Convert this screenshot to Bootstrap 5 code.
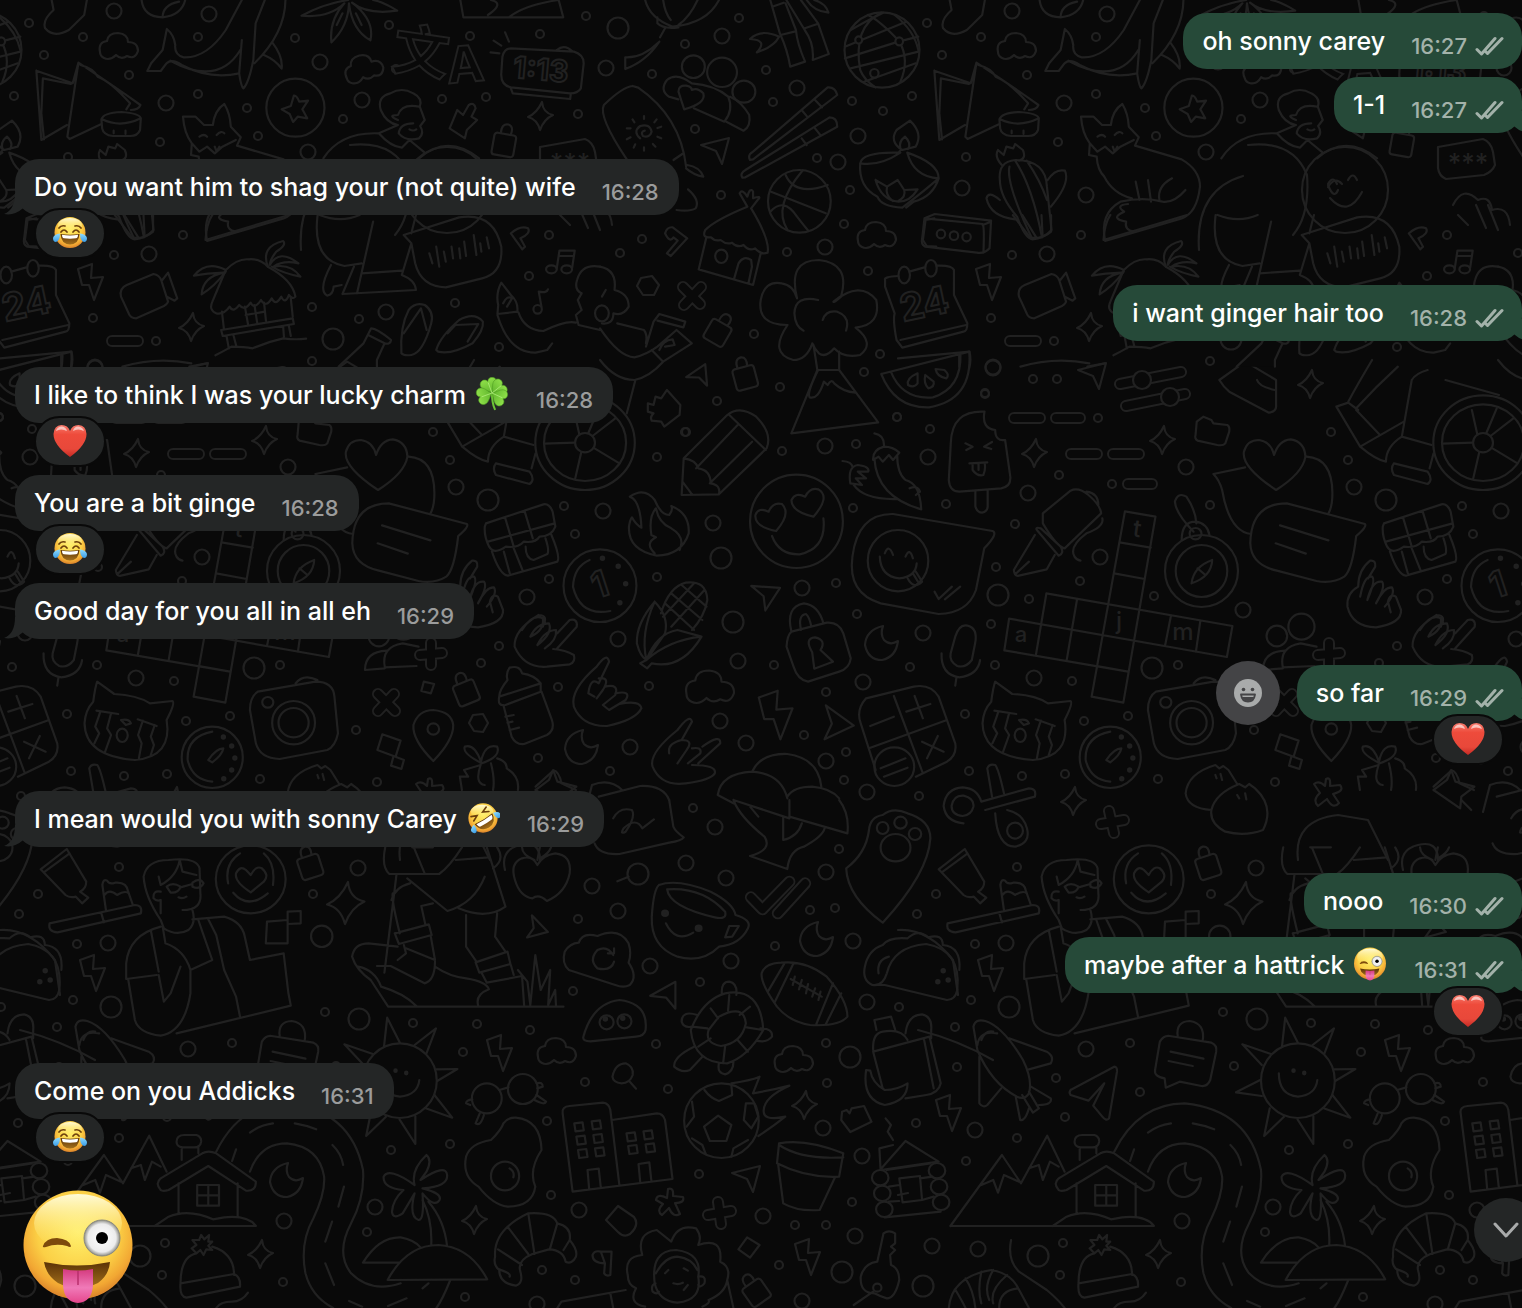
<!DOCTYPE html>
<html lang="en">
<head>
<meta charset="utf-8">
<meta name="viewport" content="width=device-width, initial-scale=1">
<title>Chat</title>
<link href="https://cdn.jsdelivr.net/npm/bootstrap@5.3.0/dist/css/bootstrap.min.css" rel="stylesheet">
<style>
:root{--wall:#090909;--line:#212121;--in:#242626;--out:#264a39}
body{background:var(--wall);color:#fff;font-family:Inter,"Liberation Sans",sans-serif}
.chat{min-height:100vh;overflow:hidden}
.wall{position:absolute;inset:0;width:1794px;height:1308px;pointer-events:none}
.wall path,.wall ellipse,.wall circle,.wall rect{fill:none;stroke:var(--line);stroke-width:2.2;stroke-linecap:round;stroke-linejoin:round;vector-effect:non-scaling-stroke}
.wall .solid{fill:var(--wall)}
.wall .dotfill *{fill:var(--line)}
.wall .fat *{stroke-width:12}
.wall .core *{stroke:var(--wall);stroke-width:8}
.wall text{fill:var(--wall);stroke:var(--line);stroke-width:2;font-family:Inter,"Noto Sans CJK SC",sans-serif;font-weight:700;text-anchor:middle}
.wall .thin{fill:var(--line);stroke:none;font-weight:500}
.thread{position:relative;padding-top:13px}
.turn{margin-top:26px}
.follow{margin-top:8px}
.incoming{padding-left:15px}
.bubble{position:relative;min-height:56px;border-radius:24px;padding:12px 20px 12px 19px;column-gap:26px;font-size:25px;font-weight:500;line-height:32px;white-space:nowrap}
.incoming .bubble{background:var(--in)}
.outgoing .bubble{background:var(--out);padding-right:18px}
.stamp{font-size:22px;line-height:24px;color:#9b9c9c;margin-bottom:-1px}
.outgoing .stamp{color:#a3b2aa}
.ticks{width:29px;height:20px}
.tail::before{content:"";position:absolute;bottom:0;width:26px;height:22px;background:inherit}
.incoming .tail::before{left:-11px;clip-path:path("M11 0 Q11 17 0 21 Q10 23 18 16 L26 8 L26 0 Z")}
.outgoing .tail::before{right:-11px;clip-path:path("M15 0 Q15 17 26 21 Q16 23 8 16 L0 8 L0 0 Z")}
.reaction{position:relative;width:72px;height:51px;margin-top:-7px;padding:0 0 2px;border:2px solid var(--wall);border-radius:26px;background:var(--in)}
.incoming .reaction{margin-left:19px}
.outgoing .reaction{margin-right:18px}
.reaction svg{width:36px;height:36px}
.inline-emoji{width:34px;height:34px;margin:-10px 1px -4px 9px}
.react-btn{width:64px;height:64px;margin:-4px 17px -4px 0;background:#444446}
.big-emoji{width:112px;height:116px;margin-left:7px}
.jump{position:absolute;right:-16px;top:1198px;width:64px;height:64px;background:var(--in)}
</style>
<script src="https://cdn.jsdelivr.net/npm/bootstrap@5.3.0/dist/js/bootstrap.bundle.min.js"></script>
</head>
<body>
<svg width="0" height="0" class="position-absolute" aria-hidden="true">
<defs>
<radialGradient id="skin" cx=".5" cy=".38" r=".62"><stop offset="0" stop-color="#fff06b"/><stop offset=".6" stop-color="#fbcf45"/><stop offset=".85" stop-color="#f2a733"/><stop offset="1" stop-color="#d9822a"/></radialGradient>
<linearGradient id="shine" x1="0" y1="0" x2="0" y2="1"><stop offset="0" stop-color="#fffde0" stop-opacity=".95"/><stop offset="1" stop-color="#ffe95c" stop-opacity="0"/></linearGradient>
<linearGradient id="mouth" x1="0" y1="0" x2="0" y2="1"><stop offset="0" stop-color="#5b3206"/><stop offset="1" stop-color="#a4701c"/></linearGradient>
<linearGradient id="tongue" x1="0" y1="0" x2="0" y2="1"><stop offset="0" stop-color="#d43a7e"/><stop offset=".55" stop-color="#f07ab8"/><stop offset="1" stop-color="#e5468c"/></linearGradient>
<radialGradient id="eye"><stop offset="0" stop-color="#fff"/><stop offset=".78" stop-color="#ececec"/><stop offset="1" stop-color="#8f8f88"/></radialGradient>
<linearGradient id="red" x1="0" y1="0" x2="0" y2="1"><stop offset="0" stop-color="#f77a6c"/><stop offset=".3" stop-color="#ee4b3b"/><stop offset=".75" stop-color="#e8483a"/><stop offset="1" stop-color="#c42a24"/></linearGradient>
<linearGradient id="tear" x1="0" y1="0" x2="0" y2="1"><stop offset="0" stop-color="#8fdcff"/><stop offset="1" stop-color="#3b9de6"/></linearGradient>
<linearGradient id="leaf" x1="0" y1="0" x2="0" y2="1"><stop offset="0" stop-color="#8fe04a"/><stop offset="1" stop-color="#5fb52c"/></linearGradient>
<symbol id="wink" viewBox="0 0 112 116">
 <circle cx="56" cy="56" r="54.500" fill="url(#skin)"/><ellipse cx="56" cy="34" rx="44" ry="29" fill="url(#shine)"/>
 <path d="M21 57Q24 49 35 49Q47 50 49 57Q49 59 45 57Q34 54 24 58Q20 59 21 57Z" fill="#7d4a0c"/>
 <circle cx="80" cy="49" r="18" fill="url(#eye)" stroke="#8a8a80" stroke-width="1"/><circle cx="80" cy="49" r="6" fill="#000"/>
 <path d="M22 73Q55 80 88 73Q87 86 76 94Q56 104 36 94Q24 86 22 73Z" fill="url(#mouth)"/>
 <path d="M41 80Q56 83 71 80V96Q70 113 56 114Q42 113 41 96Z" fill="url(#tongue)"/><path d="M56 82V96" stroke="#b92f6d" stroke-width="1.500"/>
</symbol>
<symbol id="joy" viewBox="0 0 36 36">
 <circle cx="18" cy="17.500" r="15.500" fill="url(#skin)"/><ellipse cx="18" cy="10" rx="12" ry="7" fill="url(#shine)"/>
 <path d="M7 13Q9 10 13 11M29 13Q27 10 23 11M9 17Q12 13 15 17M21 17Q24 13 27 17" fill="none" stroke="#6d400c" stroke-width="1.700" stroke-linecap="round"/>
 <path d="M8.500 19Q18 20.500 27.500 19Q27 29 18 29.500Q9 29 8.500 19Z" fill="url(#mouth)"/><path d="M10 19.800Q18 21 26 19.800Q26 23 24 23.300Q18 24 12 23.300Q10 23 10 19.800Z" fill="#fff"/>
 <path d="M8 18.500Q2 19 1 23Q1 27 4 27Q8 26 8 18.500ZM28 18.500Q34 19 35 23Q35 27 32 27Q28 26 28 18.500Z" fill="url(#tear)"/>
</symbol>
<symbol id="rofl" viewBox="0 0 36 36">
 <circle cx="18" cy="18" r="15.500" fill="url(#skin)"/><ellipse cx="17" cy="11" rx="12" ry="7" fill="url(#shine)"/>
 <g transform="rotate(-32 18 18)"><path d="M8 10L14 12.500L8 15.500M27 10L21 12.500L27 15.500" fill="none" stroke="#6d400c" stroke-width="1.700" stroke-linecap="round"/>
 <path d="M7 19Q18 20.500 29 19Q28 29.500 18 30Q8 29.500 7 19Z" fill="url(#mouth)"/><path d="M8.500 20Q18 21 27.500 20Q27 24 25 24.300Q18 25 11 24.300Q9 24 8.500 20Z" fill="#fff"/>
 <path d="M6 19Q0 20 0 24Q1 28 4 27Q7 25 6 19ZM30 19Q36 20 36 24Q35 28 32 27Q29 25 30 19Z" fill="url(#tear)"/></g>
</symbol>
<symbol id="heart" viewBox="0 0 36 36"><path d="M18 34Q1.500 22 1.500 11Q2 2.500 9.500 2Q16 2 18 8Q20 2 26.500 2Q34 2.500 34.500 11Q34.500 22 18 34Z" fill="url(#red)"/><path d="M4 8Q5 3.500 10 3.500Q14 4 15 8Q9 5 4 8ZM21 8Q22 3.500 26 3.500Q31 4 32 8Q26 5 21 8Z" fill="#fff" opacity=".6"/></symbol>
<path id="leaflet" d="M0 0C-3-4-9-6-9-11C-9-16-2-18 0-13C2-18 9-16 9-11C9-6 3-4 0 0Z" fill="url(#leaf)" stroke="#4f9d22" stroke-width=".6"/>
<symbol id="clover" viewBox="0 0 36 36">
 <path d="M18 17Q18 28 21 34" fill="none" stroke="#6cc437" stroke-width="2.200" stroke-linecap="round"/>
 <use href="#leaflet" transform="translate(18 17) rotate(-20)"/><use href="#leaflet" transform="translate(18 17) rotate(52)"/><use href="#leaflet" transform="translate(18 17) rotate(118)"/><use href="#leaflet" transform="translate(18 17) rotate(-108)"/>
 <path d="M18 17L14 6M18 17L28 9M18 17L29 22M18 17L7 21" stroke="#b4f080" stroke-width=".8"/>
</symbol>
<symbol id="ticks" viewBox="0 0 29 20"><path d="M2 13.500L6.500 18L20 2.500M12.500 17.500L27 2.500M12.500 17.500L10.500 15.500" fill="none" stroke="#a3b2aa" stroke-width="3" stroke-linecap="round" stroke-linejoin="round"/></symbol>
</defs>
</svg>

<main class="chat position-relative">
<svg class="wall" viewBox="0 0 1794 1308" aria-hidden="true">
<defs>
<path id="sparkle" class="solid" d="M2-14Q3-3 13-1Q4 3 0 14Q-3 3-12 1Q-3-3 2-14Z"/>
<path id="bolt" class="solid" d="M-12-13L2-18L1-4L13-5L4 18L-1 3L-8 3Z"/>
<path id="moon" class="solid" d="M3-17Q-14-13-15 2Q-12 17 2 17Q16 14 18-2Q10 3 4-3Q0-9 3-17Z"/>
<path id="cursor" class="solid" d="M-14-5L14-12L7 14L1 1Z"/>
<path id="cloud" class="solid" d="M-18 5Q-20-5-11-6Q-10-14 0-14Q10-13 10-5Q20-5 20 4Q17 13 9 9Q3 13-2 8Q-8 14-14 11Q-18 9-18 5Z"/>
<g id="tag"><path class="solid" d="M-5-10Q-6-20 1-20Q7-19 5-10"/><rect class="solid" x="-11" y="-10" width="22" height="22" rx="3"/></g>
<g id="doodles">
<g id="dots"></g>
<g>
<use href="#sparkle" x="540" y="116"/><use href="#sparkle" x="191" y="327"/><use href="#sparkle" x="136" y="453"/><use href="#sparkle" x="264" y="440"/><use href="#sparkle" x="412" y="384"/><use href="#sparkle" transform="translate(345 903) scale(1.500)"/><use href="#sparkle" x="175" y="801"/><use href="#sparkle" x="260" y="1254"/><use href="#sparkle" x="474" y="1220"/><use href="#sparkle" x="804" y="1105"/>
<use href="#bolt" x="90" y="282"/><use href="#bolt" transform="translate(775 715) scale(1.350)"/><use href="#bolt" x="499" y="1053"/><use href="#bolt" x="92" y="973"/><use href="#bolt" x="50" y="1113"/><use href="#bolt" x="807" y="1257"/>
<use href="#moon" x="580" y="747"/><use href="#moon" x="880" y="643"/><use href="#moon" x="815" y="939"/><use href="#moon" x="285" y="1180"/>
<use href="#cursor" x="715" y="150"/><use href="#cursor" transform="translate(698 377) rotate(-20) scale(.8)"/><use href="#cursor" x="194" y="375"/><use href="#cursor" transform="translate(763 595) rotate(18)"/><use href="#cursor" transform="translate(832 722) rotate(50) scale(1.200)"/><use href="#cursor" transform="translate(534 927) rotate(60) scale(.8)"/><use href="#cursor" transform="translate(665 997) rotate(-15)"/><use href="#cursor" x="746" y="1178"/>
<use href="#cloud" x="118" y="47"/><use href="#cloud" transform="translate(363 69) rotate(-15)"/><use href="#cloud" x="876" y="236"/><use href="#cloud" transform="translate(709 688) scale(1.250)"/><use href="#cloud" x="556" y="1052"/><use href="#cloud" x="793" y="1060"/>
<use href="#tag" transform="translate(745 377) rotate(-15)"/><use href="#tag" transform="translate(718 332) rotate(30)"/><use href="#tag" transform="translate(504 144) rotate(10)"/><use href="#tag" transform="translate(466 692) rotate(-22)"/><use href="#tag" transform="translate(756 1292) rotate(-35)"/><use href="#tag" transform="translate(310 866) rotate(-18)"/>
<path d="M606 1220L618 1206L634 1217Q640 1225 630 1234Q624 1238 618 1232ZM641 278L652 276L659 285L654 295L643 295L637 286ZM473 715L483 714L488 723L483 732L474 731L469 723Z"/>
</g>
<g class="fat"><path d="M683 287L700 304M701 287L684 305M378 694L395 711M394 694L378 711M431 643V665M420 655L442 653M718 1202L721 1224M708 1215L731 1211M211 811L216 833M203 824L226 820M112 341H138M116 418H142M158 418H182M173 454H199M215 454H241M230 484H254M222 384L283 372M228 406L287 394"/></g>
<g class="core"><path d="M683 287L700 304M701 287L684 305M378 694L395 711M394 694L378 711M431 643V665M420 655L442 653M718 1202L721 1224M708 1215L731 1211M211 811L216 833M203 824L226 820M112 341H138M116 418H142M158 418H182M173 454H199M215 454H241M230 484H254M222 384L283 372M228 406L287 394"/></g>
<g><circle class="solid" cx="244" cy="380" r="9"/><circle class="solid" cx="272" cy="397" r="9"/><path d="M428 779Q433 776 432 786L442 785Q447 791 435 794L441 803Q435 810 429 799L420 806Q414 800 422 793L416 784Q421 780 427 786ZM668 1189Q674 1187 673 1196L683 1197Q685 1203 675 1203L680 1214Q673 1218 669 1208L662 1215Q656 1211 663 1204L656 1200Q657 1193 667 1198Z"/></g>

<g transform="scale(.38265 .33333)">
<path d="M135 0L140 30Q110 60 118 85Q140 115 180 90L220 45L227 0M370 0Q375 50 425 52Q475 45 484 0M425 52Q425 15 468 5M436 87Q455 105 458 135Q455 165 480 172Q540 175 590 90L632 0M436 87L425 150L395 190L385 213H420L435 190Q450 175 475 195Q550 240 625 220M445 182Q570 260 628 150M632 120L625 220Q630 260 636 265Q650 250 662 180L668 70L692 0M746 0Q745 100 665 190M712 128Q740 170 736 206Q720 180 690 165"/>
<path d="M910 0Q850 10 788 47Q860 55 900 10Q860 60 866 127Q910 80 912 10Q920 90 968 121Q980 60 920 8Q960 45 1038 32Q1000 5 975 0M880 75L895 40M945 75L930 40M1203 0L1211 52H1472L1460 0M1330 52Q1370 15 1460 0M1283 0Q1320 10 1275 45"/>
<path d="M95 212L190 250L205 188Q300 260 367 315Q362 330 342 330M95 212L108 420L175 375M112 235L185 252M112 235L108 340L115 418M205 188L176 410L182 417L265 372M210 195Q245 205 255 230Q290 245 340 310L330 328M265 358Q270 338 317 336Q365 340 368 355L366 390Q360 408 340 408H295Q270 405 267 385ZM267 358Q315 385 368 355M297 400V392M328 402V392"/>
<ellipse cx="772" cy="323" rx="76" ry="87"/><path d="M768 287Q775 285 782 305L805 302L790 328L803 355L778 350L766 366L757 342L736 328L760 318Z"/>
<path d="M845 475Q890 395 990 400Q1020 440 1050 443L1070 420L1110 458M990 400L1040 375Q1010 370 995 330Q985 290 1020 280Q1050 260 1080 280Q1105 295 1097 320L1110 360L1098 378Q1110 400 1095 415Q1060 425 1042 400Q1045 370 1080 370M1095 475Q1170 400 1252 475M1040 360Q1010 345 1040 345Q1050 310 1095 320M1070 388Q1080 395 1088 388M1175 385L1195 330L1210 345L1225 315Q1240 305 1243 325L1232 350L1247 360L1220 390L1215 415Z"/>
<path d="M1335 145L1500 155Q1528 165 1525 195L1518 265Q1510 280 1490 280L1335 262Q1308 255 1310 220L1313 170Q1318 145 1335 145ZM1335 265L1340 280L1490 297L1492 280M1455 150Q1475 130 1497 155M1290 122L1310 137M1320 97L1330 125M1282 157L1305 160"/>
<path d="M830 645Q815 780 900 798L945 790M975 665L933 880M895 882L925 800M895 882L1087 870Q1085 840 1050 825L1075 730M1087 645L1075 700M945 820L1050 812M865 795Q830 870 855 887Q870 885 872 860L893 855M835 645Q890 670 940 645M1055 705L1200 652Q1290 635 1310 740Q1315 820 1260 835L1165 862Q1100 860 1085 790L1075 730ZM1122 760L1130 790M1140 740L1148 800M1160 755L1165 785M1180 740L1184 775M1200 745L1203 775M1213 725L1218 768M1238 705L1245 765M1255 730L1258 755M1272 712L1278 745"/>
<path d="M537 720L755 645M537 720Q540 670 555 645M300 645L345 712Q375 720 400 695V645M325 645L360 710M375 645L378 710M65 720L72 660L95 655M65 720L75 738L100 740M1335 700L1365 748L1372 740L1360 715Q1388 700 1380 685Q1360 675 1335 700"/>
<path class="solid" d="M590 810Q620 775 650 778Q680 775 700 800Q765 840 772 890Q765 900 755 885Q745 915 735 890Q720 920 710 895Q695 925 682 900Q665 930 655 908Q640 935 625 915Q610 940 600 920Q585 945 565 940Q545 930 555 905Q575 850 590 810"/>
<path d="M580 935L585 985M760 895L765 950M578 990L765 955L768 972L582 1008ZM592 1008L598 1045M610 1005L618 1040M740 980L742 1010M755 978L760 1008M563 1066Q590 1050 605 1040Q640 1040 660 1045Q700 1025 740 1015Q770 1020 800 1016M640 920L648 972M665 915L672 968M690 908L695 962M642 945L692 935M700 800Q680 740 740 723Q750 735 722 755Q705 780 705 795Q730 745 780 790Q740 780 715 800Q760 790 785 830Q740 820 710 800M590 810Q540 780 507 827Q540 820 585 818Q530 830 527 883Q560 860 590 815"/>
<path d="M1455 805L1462 752H1502L1495 805M1460 768H1500M1415 920L1408 875Q1430 880 1432 868M1310 848Q1295 880 1302 915L1300 942L1352 935Q1355 905 1335 885ZM1315 910Q1325 885 1338 895L1325 920M1300 945Q1330 1060 1400 1058L1430 1050L1443 1030M1355 937Q1370 990 1420 993Q1480 960 1505 968M1568 800Q1520 790 1508 840Q1500 870 1520 880L1510 900L1520 930L1505 945L1512 975L1568 990"/>
<ellipse cx="1441" cy="808" rx="14" ry="12"/><ellipse cx="1481" cy="808" rx="14" ry="12"/><ellipse cx="1405" cy="928" rx="11" ry="13"/>
<path class="solid" d="M1049 1060Q1045 980 1068 930Q1085 905 1110 915Q1135 935 1127 970Q1105 1060 1075 1065Q1055 1068 1049 1060ZM1055 1000L1100 925L1115 990M1140 1050Q1150 1010 1200 960Q1240 935 1262 965Q1265 990 1235 1030Q1180 1065 1145 1055ZM1170 1000L1190 975L1250 972L1222 1025M885 1100L950 1030L970 985Q985 985 1022 1020Q1020 1035 1005 1030L985 1080V1100M962 1005L1005 1030"/>
<path d="M0 1075L187 1055Q192 1080 186 1105M160 1060V1100M495 1100L540 1090M500 1090Q410 1070 320 1100"/>
</g>

<g transform="translate(600 0) scale(.38265 .33333)">
<path d="M118 0Q130 55 190 80Q280 70 311 0M150 52V70Q165 88 205 82M165 0Q170 40 185 60M255 0Q235 50 205 75M170 85L157 112M155 125Q120 185 66 207V172Q110 175 155 125M445 0L470 100Q490 150 497 200L536 185Q515 130 512 90L485 10M487 0L535 90Q560 130 556 180L598 162L570 70L525 0M472 105L508 95M535 85L568 72M450 20L480 8M468 110Q420 85 392 117Q440 120 410 157Q455 140 468 110M540 0Q560 35 597 38Q590 10 560 0"/>
<ellipse cx="737" cy="150" rx="98" ry="113"/><path d="M655 90Q700 60 740 38M640 140L800 65M640 175L782 124L832 110M655 205L832 155M690 245L825 190M735 38Q660 80 680 210Q690 240 720 262M700 45Q730 60 782 124Q810 180 785 245M770 45Q820 90 832 150"/><ellipse class="solid" cx="676" cy="120" rx="9" ry="11"/><ellipse class="solid" cx="782" cy="124" rx="10" ry="12"/><ellipse class="solid" cx="717" cy="220" rx="11" ry="13"/>
<ellipse cx="244" cy="200" rx="30" ry="34"/><ellipse cx="319" cy="217" rx="39" ry="44"/><ellipse cx="376" cy="275" rx="30" ry="33"/><path d="M240 250Q200 215 175 240Q155 270 180 290L205 298M240 250Q300 255 335 290Q350 330 325 365L245 325M330 365L375 392Q395 380 390 345Q370 305 340 290"/><path class="solid" d="M220 328L205 275Q205 255 225 257Q240 260 240 270Q255 262 270 280Q278 310 220 328Z"/>
<path d="M85 258Q60 260 10 315Q-5 350 70 478M225 500Q210 350 100 263L85 258M192 480L215 462M228 495Q260 500 270 530Q245 525 225 505M230 568Q262 600 250 625Q235 635 200 630M115 348V357M85 358L90 367M148 358L142 367M70 385H80M160 380L150 384M70 418L80 412M160 415L150 410M88 443L92 433M115 452V442M145 440L138 432M105 415Q85 395 105 378Q130 370 135 395Q130 415 112 408Q105 395 117 392"/>
<path d="M392 480Q385 465 400 455L595 262Q615 260 620 285L400 478ZM527 330L543 352M562 300L580 322M372 533Q365 520 380 510L600 352Q620 352 620 380L380 532ZM527 415L540 435M562 385L577 407"/>
<ellipse cx="521" cy="604" rx="82" ry="94"/><path d="M447 575L590 640M530 511Q450 620 490 690M485 525Q510 590 595 555M445 635Q480 590 515 650Q535 680 545 693"/>
<path d="M385 620Q300 660 275 690Q265 715 290 712Q300 725 315 720Q330 735 345 728Q360 745 375 735Q390 755 405 745Q420 765 438 758Q445 720 395 625M385 620L365 580Q372 565 385 590Q392 560 400 575V595Q425 585 412 600L395 625M278 712L258 808L400 855L420 760M350 838L362 790Q375 765 395 780L397 800L388 850"/><ellipse cx="317" cy="769" rx="16" ry="20"/>
<path d="M680 490Q685 455 780 458L787 448M680 490Q730 500 785 458M680 490Q675 560 725 590Q735 620 790 623Q850 570 885 535Q885 490 803 458M803 458Q820 530 885 535Q870 590 820 605L800 623M790 450Q755 425 775 390L810 362Q845 400 825 440ZM785 445Q780 425 797 410Q815 430 805 447M720 540L750 560L778 540L795 570L830 568Q810 605 780 605Q735 600 720 540M750 560Q745 585 765 603M795 570Q800 590 780 603"/>
<path d="M848 655L875 642L1022 662L1018 745Q1005 762 985 758L850 740Q838 735 842 715ZM848 655L1000 672Q1005 680 1002 758M1000 675L1022 665"/><ellipse cx="891" cy="702" rx="11" ry="13"/><ellipse cx="925" cy="707" rx="11" ry="13"/><ellipse cx="958" cy="711" rx="11" ry="13"/>
<path d="M1045 540Q1040 485 1085 480Q1165 480 1168 560L1180 690Q1160 715 1130 718Q1110 715 1090 650Q1045 590 1045 540M1070 500Q1060 550 1130 718M1085 482Q1130 560 1155 712M1115 482Q1150 540 1168 600M1170 540Q1190 505 1215 512Q1230 550 1178 620M1045 600Q1015 570 1010 595Q1020 650 1085 658M1050 495Q1030 470 1040 450L1055 465L1062 440L1080 445L1085 432L1105 450Q1115 475 1095 482"/>
<path d="M1257 350L1290 350L1312 375H1335Q1340 330 1365 312Q1380 340 1382 380L1408 412L1398 437L1520 478Q1568 510 1568 560Q1560 640 1520 655L1320 723Q1305 640 1360 605Q1420 590 1470 605Q1500 610 1530 570M1257 350Q1260 400 1280 430L1278 465L1298 470Q1300 510 1318 530Q1340 580 1390 595M1280 430L1300 455L1320 440L1340 460L1360 440L1395 420M1400 545L1410 600M1432 540L1440 605M1495 535Q1455 560 1462 600M1380 612Q1345 615 1370 635Q1330 655 1375 665Q1370 690 1395 695M1340 440L1345 455L1352 440M1300 410Q1312 400 1320 410M1345 405Q1357 390 1365 400"/>
<path d="M745 840Q740 830 780 828M808 815L848 802M880 797Q920 795 925 810V885L960 970Q960 995 950 995L790 1043L775 1020Q765 960 770 940L745 860V840M785 1020L957 975"/><ellipse cx="795" cy="825" rx="15" ry="25"/><ellipse cx="865" cy="805" rx="15" ry="25"/>
<path d="M1095 890Q1090 865 1110 855L1180 822Q1195 825 1200 840L1218 905Q1215 915 1200 922L1135 955Q1120 955 1115 940ZM1203 840L1218 818L1242 895L1235 902L1215 890"/>
<path d="M515 895Q490 780 572 780Q655 790 630 890Q610 910 610 905Q680 840 722 900Q735 975 668 983Q720 1030 680 1065Q635 1075 612 1045Q590 1075 572 1060Q560 1045 555 1030Q540 1080 505 1080Q440 1060 490 975Q410 975 420 900Q430 840 475 850Q505 855 515 895M570 900Q510 885 508 940Q510 980 532 992M582 960Q590 930 620 935Q655 950 643 992M558 1035L568 1110H625V1055M568 1110L500 1300L727 1267L625 1110M570 1110Q540 1180 548 1192Q570 1200 585 1145L595 1155Q605 1135 612 1150Q635 1175 668 1178"/>
<path d="M735 1122L965 1055Q975 1200 860 1222Q770 1225 735 1122M760 1115Q790 1200 870 1192Q945 1165 942 1062M830 1120Q800 1135 805 1155Q820 1165 830 1150ZM850 1125Q845 1150 858 1165Q875 1160 872 1145ZM877 1107Q880 1130 905 1135Q915 1125 900 1110Z"/>
<path d="M0 800Q45 810 38 870Q75 880 75 920Q60 950 35 940Q35 975 5 970M15 870L5 890M0 985Q50 1070 90 1072Q120 1065 150 1040L200 990L240 1030L165 1085L135 1050M155 1050Q165 1020 190 1018L195 1035L170 1040M120 1040L140 965L155 942L223 965L218 982L150 962M45 970L115 990Q125 1005 120 1030M0 1080Q40 1140 90 1140Q130 1130 165 1085M92 1142L70 1240"/><ellipse cx="5" cy="940" rx="18" ry="24"/>
<path d="M125 1210L140 1215L145 1190L160 1195L175 1170L210 1215L208 1245L168 1280L160 1265L135 1262Q130 1250 140 1240L125 1235Z"/>
<path d="M170 700Q175 680 190 682L228 715L185 768L175 760L203 722L192 712Q182 730 170 700"/>
</g>

<g transform="translate(350 400) scale(.41454 .33333)">
<ellipse cx="567" cy="128" rx="120" ry="142"/><ellipse cx="567" cy="128" rx="99" ry="115"/><ellipse cx="567" cy="128" rx="24" ry="29"/><path d="M543 128L468 131M585 108L640 55M590 145L650 190M558 156L543 237M553 102L540 30M575 99L600 25"/>
<path d="M675 290Q710 260 735 300Q750 345 770 345Q780 330 775 318Q820 340 817 400Q800 465 740 467Q670 450 673 380Q675 360 680 352Q690 375 703 383Q700 300 675 290M735 460Q710 430 738 412L727 405Q720 350 738 325Q745 370 775 385Q810 410 795 450"/>
<path d="M800 285L805 175L910 45Q940 15 980 50Q1020 100 1005 145L890 283ZM805 175Q835 180 840 205Q870 210 870 250Q895 255 890 283M915 45L1003 150M935 75L835 205M970 125L868 250M802 245L825 283"/>
<ellipse cx="1077" cy="364" rx="112" ry="140"/><path d="M1018 408Q1035 465 1085 463Q1150 445 1142 355M1028 393Q975 380 978 345Q985 320 1010 335Q1020 305 1042 312Q1065 340 1028 393M1118 350Q1065 335 1065 300Q1075 275 1098 290Q1110 260 1130 268Q1160 290 1118 350"/>
<path d="M1265 100Q1290 105 1288 140Q1260 150 1262 180L1275 170L1285 185L1300 165L1310 180L1325 158Q1310 140 1288 140M1265 175Q1270 290 1378 328Q1375 250 1340 240Q1320 220 1320 165M1188 183Q1210 185 1212 200M1207 250Q1200 200 1225 195Q1255 200 1250 215L1225 215L1245 235L1220 235L1235 255L1207 250M1215 255Q1240 300 1320 297M1350 265Q1370 255 1375 275L1365 285"/>
<path d="M1310 342L1550 393Q1565 400 1530 445L1510 570Q1490 640 1420 642L1280 610Q1200 580 1212 470Q1225 340 1310 342M1278 470Q1280 530 1325 535Q1365 530 1367 490M1290 460Q1300 430 1310 465M1340 470Q1350 440 1358 475M1345 535Q1360 570 1380 545L1365 515M1358 520L1370 545M1410 575L1420 597L1452 560M1435 598L1472 560"/><ellipse cx="1322" cy="482" rx="73" ry="92"/>
<ellipse cx="603" cy="557" rx="88" ry="109"/><path d="M628 633Q555 650 538 560Q540 500 578 480"/><g class="dotfill"><ellipse cx="609" cy="475" rx="4" ry="5"/><ellipse cx="647" cy="499" rx="4" ry="5"/><ellipse cx="665" cy="551" rx="4" ry="5"/><ellipse cx="651" cy="608" rx="4" ry="5"/></g>
<path d="M735 605Q690 670 692 730Q700 770 715 780L700 790L717 805L728 790Q800 810 848 710L790 690M735 605Q770 650 760 700L715 780Q700 700 735 605M848 710Q770 720 715 780Q740 700 790 690M750 640Q770 560 810 548Q860 540 862 600Q855 650 825 690M775 580L850 660M760 610L830 690M800 555L860 620M855 570L775 680M830 550L755 650"/>
<path d="M455 645Q395 690 397 740Q420 805 475 800L530 793Q545 785 540 765Q520 750 490 747M455 645Q480 645 465 680M415 690Q440 640 465 655Q470 690 435 710Q450 670 480 670Q490 700 452 735Q470 690 497 690Q500 720 470 745M500 700L530 660Q550 655 547 680L500 745"/>
<path d="M595 800Q620 755 625 785L600 850Q580 830 575 880L590 890M595 800Q530 870 540 920Q560 980 620 978Q690 960 703 925Q700 900 650 912M600 835Q630 830 610 870L595 895M615 860Q650 850 640 885L610 915M640 880Q680 870 665 900L625 930L610 915"/>
<path d="M790 990Q820 940 825 965L800 1020Q765 1030 770 1060M790 990Q720 1060 730 1100Q750 1160 810 1150Q870 1140 880 1120Q885 1095 825 1095M800 1020Q830 1020 812 1050L790 1090M850 1040Q895 1000 893 1030L840 1090M825 1045Q850 1040 845 1060L815 1090"/>
<path d="M1065 695Q1050 620 1095 610Q1130 615 1142 670M1088 690Q1080 645 1100 642Q1108 650 1113 680M1065 695L1150 668Q1180 665 1190 700L1208 775Q1205 805 1180 815L1105 845Q1080 840 1070 800L1053 740Q1055 705 1065 695M1115 757Q1095 715 1122 712Q1150 720 1135 750L1165 785L1120 806Z"/>
<path d="M1460 710Q1470 670 1490 677Q1515 685 1508 730L1500 780Q1485 805 1465 798Q1445 785 1449 760ZM1427 760Q1425 825 1470 832Q1515 825 1520 780M1463 832L1460 857"/>
<path d="M360 890L460 850M360 890Q355 920 375 915L460 875V850Q445 825 415 820Q410 795 385 803Q375 820 380 840Q360 870 360 890M370 915L390 1010Q400 1035 420 1032L475 1005Q495 990 487 960L462 875M375 950L395 945M380 968L392 965M385 990L408 983"/>
<path d="M1245 895L1360 860Q1400 850 1420 890L1460 1030Q1465 1065 1440 1085L1365 1130M1245 895Q1220 930 1232 970L1268 1110M1312 888L1382 1120M1252 1045L1440 960M1255 978L1312 950M1342 935L1400 912M1362 888L1382 955M1380 1025L1432 1055M1418 1008L1392 1075M1280 1105L1340 1075M1288 1130L1345 1103"/><ellipse cx="1313" cy="1100" rx="48" ry="58"/>
<path d="M201 1083Q150 1020 153 975Q165 930 201 930Q245 935 249 975Q250 1020 201 1083"/><ellipse cx="201" cy="987" rx="14" ry="17"/>
<path d="M78 1003L122 1022L110 1070L66 1050ZM105 1068L130 1080L124 1107L99 1097ZM178 845L203 852L195 880L172 873ZM318 1090Q270 1060 277 1040Q300 1030 316 1085Q325 1030 355 1040Q365 1070 318 1090M355 1075Q380 1085 378 1105Q410 1130 405 1170M270 1170L265 1130H285L275 1110L315 1095Q300 1150 325 1155M340 1090Q350 1140 345 1170M448 1170L480 1140L490 1110Q505 1115 510 1150L545 1170"/>
<path d="M887 1185Q895 1120 970 1115Q1040 1120 1055 1195M970 1115Q990 1060 1055 1062Q1130 1075 1137 1160M1055 1190Q1070 1160 1115 1160Q1160 1165 1180 1195M600 1190L700 1158Q755 1155 770 1200M887 1185L925 1210"/>
</g>

<g transform="translate(900 380) scale(.3967 .33333)">
<path class="solid" d="M213 95Q130 90 128 190L123 300Q125 335 150 335L255 325Q280 320 278 290L265 180Q240 185 240 150Q205 145 213 95ZM190 333V380Q195 398 207 398Q220 395 221 380V330M165 190L183 200L167 210M232 186L212 200L230 207M175 250L220 247M183 250V270Q195 290 210 285Q217 265 213 248M198 250V270"/>
<path d="M360 400L430 332Q450 320 475 345Q505 375 507 400L415 505Q395 500 360 430ZM345 450L400 527Q415 520 405 500L355 445Q340 440 345 450M340 465L287 570Q288 590 300 587L370 568L390 525M290 583L325 545M470 335Q500 340 500 375M510 415Q515 440 470 460Q425 500 440 530Q445 540 455 542"/>
<path d="M567 394L644 410L563 968L483 950ZM553 487L632 503M540 580L617 597M497 858L575 875M369 640L838 738L824 831L275 716L263 811L575 875M369 640L343 822M446 660L420 842M683 707L668 798M757 723L746 815"/>
<ellipse cx="760" cy="573" rx="92" ry="108"/><ellipse cx="760" cy="573" rx="65" ry="78"/><ellipse cx="745" cy="461" rx="15" ry="17"/><path d="M710 480Q710 425 745 425Q775 430 780 465M740 455Q695 400 693 365Q700 335 722 350Q745 390 747 430M735 610Q740 560 787 540Q785 590 735 610M750 565L770 585"/>
<path d="M948 330Q860 260 867 215Q875 180 905 180Q935 185 943 225Q955 180 985 178Q1020 185 1022 230Q1015 280 948 330ZM870 262L790 282Q805 300 812 330Q830 455 885 462M1025 230Q1090 235 1090 340Q1090 380 1080 400"/><path class="solid" d="M975 370L1172 432Q1178 440 1150 468Q1140 570 1120 590Q1090 612 1050 603L950 572Q885 555 883 490Q885 370 975 370ZM958 436L1080 481M947 490L1023 521"/>
<path d="M1220 430L1365 373Q1380 370 1388 395L1395 440Q1385 470 1355 470Q1345 490 1315 485Q1300 505 1270 500Q1240 525 1228 500Q1215 470 1217 440ZM1225 485L1393 430M1268 412L1290 500M1317 392L1338 475M1235 515Q1255 585 1275 587L1400 545Q1408 530 1385 465M1265 515L1280 580M1290 505L1312 570M1320 500Q1320 535 1340 540L1375 522Q1380 510 1370 475"/>
<path d="M1155 620Q1155 570 1185 542Q1200 540 1198 560L1180 595M1155 620Q1125 640 1128 680Q1140 740 1200 742Q1265 730 1263 690L1250 650Q1235 640 1230 665L1237 697M1160 650Q1170 585 1190 590Q1200 600 1178 660Q1190 600 1215 605Q1225 620 1200 670Q1220 620 1240 622Q1250 640 1222 680"/>
<path d="M1150 90L1210 165M1100 80L1160 200Q1200 240 1225 245M1160 200L1270 125M1290 0L1265 170L1340 195M1265 170Q1225 200 1225 245M1245 250L1330 275Q1345 300 1330 312L1245 285Q1235 265 1245 250M1345 220L1335 265M1130 65Q1150 20 1190-60M1100 80L1130 68L1155 90M1150 85Q1200 20 1255-40M1290 0Q1300-20 1330-30M1375 0L1510 45M805 0Q815 20 830 35L930 98Q950 95 948 75V0L870-55ZM900 0Q905 20 945 30"/>
<path d="M748 125L765 110L785 120L790 130L825 135Q832 140 830 155L820 190Q815 198 800 195L750 182Q742 175 745 165Z"/>
<ellipse cx="950" cy="768" rx="26" ry="31"/><ellipse cx="1012" cy="740" rx="33" ry="39"/><path d="M965 862Q955 800 1010 790L1050 800M965 862L1045 858M915 870Q915 815 970 812M915 870L965 865"/>
<path d="M230 965Q235 920 240 905L283 942Q340 945 373 970L430 963Q437 970 415 1020Q430 1130 335 1140Q210 1130 208 1030Q210 990 230 965M238 992L293 1002M342 1018L390 1038M248 995L235 1040L245 1060L233 1090M275 1000L265 1045L275 1065L260 1115M355 1022L343 1065L352 1090L345 1135M385 1035L375 1070L383 1095L375 1125M300 1020Q320 1015 325 1030L312 1035Z"/><ellipse cx="303" cy="1066" rx="14" ry="20"/>
<path d="M645 935L790 905Q835 905 838 950L847 1060Q840 1100 820 1110L700 1137Q650 1135 640 1090L625 990Q625 950 645 935M740 910Q760 880 795 900"/><ellipse cx="735" cy="1028" rx="54" ry="65"/><ellipse cx="735" cy="1028" rx="38" ry="44"/><ellipse cx="670" cy="967" rx="14" ry="16"/>
<ellipse cx="530" cy="1132" rx="77" ry="92"/><path d="M530 1055Q465 1070 468 1140Q480 1200 530 1205M520 1140Q540 1105 558 1105Q555 1125 530 1147Z"/><g class="dotfill"><ellipse cx="558" cy="1071" rx="4" ry="5"/><ellipse cx="579" cy="1098" rx="4" ry="5"/><ellipse cx="587" cy="1134" rx="4" ry="5"/><ellipse cx="579" cy="1170" rx="4" ry="5"/><ellipse cx="559" cy="1196" rx="4" ry="5"/></g>
<path d="M720 1240Q725 1180 795 1155L805 1165L815 1158L828 1170L850 1212M720 1240Q725 1285 785 1290Q795 1240 855 1212L870 1222L880 1212L895 1225Q945 1280 915 1350Q870 1370 820 1355Q780 1330 785 1290M795 1185L798 1195M808 1182L812 1200M850 1245L855 1255M870 1240L873 1258"/>
<path d="M1345 1220L1390 1172L1400 1205L1448 1220L1415 1250L1412 1285L1345 1230M1415 1260L1440 1290"/>
<path d="M110 1278Q115 1225 158 1222Q195 1225 205 1265L325 1225Q345 1225 340 1250L215 1290M232 1250L220 1165Q225 1150 240 1155Q248 1165 262 1240M110 1278Q115 1325 160 1330M130 1278Q135 1245 160 1247Q188 1255 185 1280Q180 1305 158 1308Q130 1305 130 1278M240 1300Q245 1400 290 1400Q330 1390 320 1345Q310 1300 270 1290"/><ellipse cx="290" cy="1352" rx="20" ry="24"/>
</g>
<g transform="translate(350 800) scale(.41454 .33333)">
<path d="M925 0Q940 50 1000 110Q1020 150 965 168L1055 207Q1060 150 1095 140Q1140 110 1145 85M925 0L1060 55V0M965 20L985 50M1045 50V120Q1080 110 1090 70M1060 50L1200 100Q1205 40 1180 0M770 0L780 80Q785 95 805 112Q800 122 770 128L650 162Q600 165 590 130M635 55Q650 20 680 30Q690 50 665 95Q650 105 660 85Q690 50 705 85L733 58M645 244L672 230"/>
<path d="M1285 368Q1200 290 1197 205Q1245 160 1252 90Q1255 50 1285 45Q1310 20 1345 40Q1400 60 1400 115Q1395 220 1285 368Z"/><ellipse cx="1316" cy="143" rx="36" ry="41"/><ellipse cx="1285" cy="84" rx="14" ry="18"/><ellipse cx="1328" cy="68" rx="15" ry="18"/><ellipse cx="1363" cy="102" rx="15" ry="18"/>
<path d="M1420 208L1483 147L1530 245Q1530 265 1515 275L1535 293L1520 310L1505 290Q1490 295 1480 285ZM1430 215L1490 160"/>
<path d="M85 142Q75 200 95 222H215Q240 200 270 142M150 142H200M155 145L180 220M112 225L83 518M138 235L235 333Q300 310 325 230M330 142L375 320Q330 360 262 325M255 180L335 172M103 280Q100 300 120 400M172 318L182 375M172 318L200 310M108 400L190 373L197 405L118 432ZM100 300Q110 260 145 250M130 435L135 460L115 480M135 445L205 480L195 410M65 498H98L180 550Q205 540 205 485M280 345V440L305 485M355 340L350 410L375 455M303 487L380 455L387 492L312 518ZM318 520L330 548L415 528L420 615M388 495L395 525M205 500Q240 530 280 535Q330 545 335 568Q300 585 310 620M5 470Q10 430 45 430L115 440M5 470Q15 510 50 540L92 620H515M20 500Q60 510 75 560Q130 580 160 618M405 510L428 545L435 615L447 465L460 570L483 510L478 615L495 570L497 620M355 142Q375 180 345 205"/>
<path d="M452 195Q440 165 415 175Q385 190 398 240Q410 290 440 295Q455 280 475 303Q520 280 530 220Q535 165 495 160Q465 165 452 195M452 180Q455 160 458 142M415 142Q415 165 445 180M485 142Q480 160 458 175"/>
<path d="M745 255Q790 235 870 275Q925 310 930 345Q970 360 960 385Q940 435 890 440Q850 490 790 470Q725 440 728 350Q732 270 745 255M765 268Q850 260 905 335Q910 360 880 352Q770 320 765 268ZM915 378L938 378L922 410L905 412ZM762 370Q785 430 828 398"/><g class="dotfill"><ellipse cx="760" cy="340" rx="7" ry="8"/><ellipse cx="841" cy="385" rx="7" ry="8"/></g>
<g class="fat"><path d="M967 292L995 328L1060 245M1032 340L1098 250"/></g><g class="core"><path d="M967 292L995 328L1060 245M1032 340L1098 250"/></g>
<path d="M528 510Q510 490 518 455Q530 430 552 428Q560 395 597 408Q650 380 672 430Q680 460 672 488Q695 530 675 555Q660 565 640 555ZM635 465Q620 435 597 450Q575 480 597 505Q630 515 637 485M622 460H637V445"/>
<path d="M563 710Q585 610 650 600Q720 610 713 690Q710 708 690 710L580 724Q560 724 563 710"/><ellipse cx="619" cy="667" rx="17" ry="21"/><ellipse cx="662" cy="664" rx="17" ry="21"/><g class="dotfill"><ellipse cx="616" cy="657" rx="4" ry="5"/><ellipse cx="658" cy="655" rx="4" ry="5"/></g>
<path d="M905 580Q990 560 997 690Q960 770 910 790Q830 790 822 690Q850 600 905 580ZM890 650Q950 610 955 670Q945 730 895 738Q855 730 865 690ZM870 625L888 655M915 585L912 632M965 620L940 645M995 690L957 682M960 755L935 720M900 790L905 738M840 740L870 715M825 680L862 685M897 580Q895 545 915 545Q935 550 932 585M838 645Q800 630 800 665Q805 685 825 680M990 685Q1020 685 1018 710Q1005 730 980 722M890 790Q885 820 905 823Q925 815 925 785M830 740Q780 770 782 800Q800 820 820 810L850 770"/>
<path d="M993 520Q1000 490 1040 488Q1100 480 1150 530Q1200 600 1200 650Q1180 680 1110 675Q1060 665 1030 620Q990 550 993 520M1048 490L1008 575M1070 490L1025 605M1165 550L1125 672M1185 580L1148 672M1063 537L1138 590M1073 530L1068 555M1090 540L1083 568M1105 552L1100 580M1122 565L1115 590M1135 575L1130 600"/>
<path d="M1290 555L1440 600Q1460 600 1465 570Q1475 450 1390 432Q1310 440 1295 520Q1285 560 1260 555Q1235 540 1242 500Q1250 450 1285 435Q1300 410 1345 415Q1370 385 1395 412Q1430 400 1430 435Q1475 440 1470 510M1260 555L1290 555M1275 520Q1270 480 1300 470"/><g class="dotfill"><ellipse cx="1431" cy="512" rx="4" ry="5"/><ellipse cx="1418" cy="545" rx="4" ry="5"/><ellipse cx="1443" cy="540" rx="4" ry="5"/></g>
<path d="M1270 690L1265 660L1305 650L1315 688M1262 750Q1260 700 1285 695Q1330 685 1345 720M1262 755L1398 710L1425 850Q1420 880 1390 885L1340 895M1262 755L1285 865M1340 700Q1345 645 1380 643Q1405 650 1402 690V715M1385 720L1408 865M1245 810Q1235 900 1290 915Q1345 905 1345 850Q1320 870 1290 870Q1260 850 1255 812Z"/>
<path d="M537 1175L513 940Q510 920 530 918L610 908Q625 910 628 930L650 1157M632 960L740 940Q755 940 760 960L778 1137L537 1175M577 1168L573 1110L600 1106L605 1162M700 1145L696 1092L722 1087L727 1142"/>
<path d="M541 970l20-3l3 24l-20 3zM583 964l20-3l3 24l-20 3zM546 1010l20-3l3 24l-20 3zM587 1005l20-3l3 24l-20 3zM550 1050l20-3l3 24l-20 3zM591 1045l20-3l3 24l-20 3zM667 1000l20-3l3 24l-20 3zM708 994l20-3l3 24l-20 3zM671 1038l20-3l3 24l-20 3zM713 1033l20-3l3 24l-20 3z"/>
<ellipse cx="896" cy="962" rx="90" ry="112"/><path d="M888 947L920 975L908 1023H868L854 980ZM855 870Q870 895 890 903L922 885L920 855M825 905L830 950L812 980M955 910H975L985 950L968 985L950 960ZM825 1015L850 1035L858 1062M960 1020L925 1045L920 1070M920 850Q970 840 988 830L972 880Q1020 870 1060 857Q1000 890 998 930Q995 965 1050 950Q1020 980 985 1008"/>
<path d="M400 953Q460 960 462 1050Q430 1110 447 1160Q440 1220 380 1220Q345 1215 310 1160Q270 1130 280 1070Q290 1030 340 1020Q365 990 370 970Q380 952 400 953M385 1105Q398 1115 394 1132"/><ellipse cx="374" cy="1128" rx="34" ry="43"/>
<ellipse cx="330" cy="895" rx="36" ry="45"/><ellipse cx="417" cy="867" rx="36" ry="45"/><path d="M360 870L382 862M295 898Q280 900 280 910L290 915M313 940L303 970Q315 980 323 945M450 850Q465 845 465 860L452 865M450 885L473 905Q470 917 445 900"/>
<path d="M633 830Q640 790 665 790Q685 800 682 825Q675 850 655 850Q635 848 633 830M675 845L690 866"/>
<path d="M1035 1030Q1100 1015 1190 1060L1180 1130Q1100 1135 1030 1090ZM1035 1035Q1090 1080 1190 1072M1033 1095L1045 1210Q1080 1235 1133 1230L1170 1132"/>
<path d="M1280 1108L1340 1023L1420 1085L1280 1110L1277 1045L1310 1035M1292 955L1305 975L1297 995L1310 1020M1295 1110L1400 1090M1300 1160L1325 1155M1375 1135L1405 1130M1300 1205L1325 1203M1380 1200L1408 1190M1290 1252L1425 1235M1325 1135L1375 1128L1380 1200L1333 1207Z"/><ellipse cx="1279" cy="1133" rx="20" ry="23"/><ellipse cx="1284" cy="1180" rx="20" ry="23"/><ellipse cx="1289" cy="1228" rx="20" ry="23"/><ellipse cx="1416" cy="1112" rx="20" ry="23"/><ellipse cx="1421" cy="1160" rx="20" ry="23"/><ellipse cx="1426" cy="1207" rx="20" ry="23"/>
<path d="M1187 935L1198 930L1205 940L1210 925L1240 918L1258 965L1207 996L1185 960ZM958 1312L988 1335L965 1373L937 1348ZM585 1365Q590 1350 605 1355H631L628 1425Q618 1430 613 1420L615 1390Q585 1390 585 1365M605 1355L615 1390"/>
<path d="M350 1370Q345 1290 430 1240Q490 1235 500 1270Q535 1280 530 1320Q550 1350 545 1370Q535 1395 520 1385Q515 1350 480 1348L440 1362Q405 1380 410 1410Q420 1450 400 1457Q360 1450 360 1410Q345 1395 350 1370M380 1280L430 1362M430 1240L445 1362M500 1270L482 1348M530 1320L515 1350M357 1348L415 1395M360 1408Q390 1420 385 1430"/>
<path d="M705 1365Q690 1300 740 1290L775 1325Q790 1270 835 1285Q850 1310 840 1335Q900 1310 893 1385Q920 1400 910 1440Q905 1480 865 1500Q870 1510 850 1520M705 1365Q660 1370 670 1425Q670 1455 690 1465Q670 1510 712 1520M735 1450Q725 1350 787 1350Q850 1360 840 1430Q850 1500 790 1508Q745 1505 735 1450M738 1420Q760 1370 790 1370Q825 1375 838 1410M780 1450Q792 1455 803 1448M805 1470L815 1455M760 1420L768 1410M805 1405L815 1412M840 1430Q860 1425 855 1450Q845 1465 840 1455M737 1450Q725 1455 730 1475Q740 1485 745 1475M910 1440L925 1524M500 1524L510 1505L665 1470M628 1480L635 1524"/>
<path d="M1272 1385L1287 1300Q1300 1288 1315 1300L1315 1330L1305 1340L1315 1350L1303 1365L1305 1395Q1325 1405 1325 1440Q1315 1495 1295 1495Q1280 1490 1265 1480Q1230 1480 1232 1430Q1240 1390 1272 1385M1262 1475L1215 1515"/><ellipse cx="1272" cy="1463" rx="10" ry="12"/>
</g>

<g transform="translate(900 860) scale(.3967 .33333)">
<path d="M120 190L335 135Q355 135 350 160L140 217Q115 215 120 190M250 158L257 187M262 150L253 75Q255 55 265 62Q270 75 285 68Q315 65 318 95L330 135M258 105Q270 85 290 105Q310 90 320 100"/>
<path d="M357 50Q365 0 420 0Q490-10 498 25L500 100Q505 150 455 150M357 50Q360 110 400 180L408 205Q440 230 470 210Q490 190 480 150M400 95Q380 90 382 115Q390 125 400 120V160M395 50L400 75Q440 50 448 0L455 35L490 45M415 80Q430 65 450 80Q445 100 425 98ZM480 68Q500 50 508 70Q500 90 480 80ZM450 82L480 72M445 112Q455 118 465 110M400 200Q320 225 313 310V357L390 345M375 210L395 335M405 200L412 250M480 178L560 170Q605 185 612 230M495 180L505 215M520 178L540 225M318 357L335 480Q345 520 400 527Q460 515 475 400M395 345L408 425L425 400M440 520L728 437L722 400M590 410L600 470M540 225L560 330L590 410M612 230L625 300L710 280L722 400M412 250Q460 270 475 330V400M425 400L450 320M505 215L530 300L475 330"/>
<ellipse cx="627" cy="58" rx="88" ry="102"/><path d="M627 97Q585 65 590 40Q600 15 615 30L627 45Q640 15 655 25Q675 45 660 65ZM570 70Q560 10 600-20M683 75Q690 10 660-20M583 98Q620 150 670 100"/>
<path d="M665 250L668 185L720 180V250ZM720 155L753 153V190L720 192Z"/><ellipse cx="806" cy="229" rx="27" ry="32"/>
<path d="M185 500Q190 475 215 483Q260 500 310 600Q335 660 325 700Q315 720 295 710Q230 670 195 570ZM195 555Q200 510 245 520M205 540Q215 510 235 515M275 535L370 575Q390 590 380 610L325 628M200 590V730Q210 745 220 735L255 685M292 712L303 780Q315 785 325 745M308 705L335 758L350 745L325 695M330 680L380 715Q385 735 350 735"/>
<path d="M430 690L540 620Q548 620 547 635L527 775Q520 785 510 770L487 737L515 670L475 722L430 705Q425 698 430 690"/>
<path d="M700 528Q695 485 730 483Q770 490 763 542M655 545Q665 525 680 528L785 548Q800 555 797 575L782 660Q775 680 760 678L705 665L670 683L667 655Q640 650 643 630ZM682 575L765 596M677 603L738 618"/>
<ellipse cx="1003" cy="662" rx="93" ry="112"/><path d="M955 640Q955 705 1003 710Q1048 705 1052 660M963 560L971 473L1003 548M1040 555L1094 505L1070 580M1095 628L1148 627L1097 663M1090 705L1135 773L1068 745M1042 768V852L1002 778M968 770L918 828L932 745M912 708L847 697L908 660M912 615L863 553L935 582"/><g class="dotfill"><ellipse cx="992" cy="632" rx="3" ry="4"/><ellipse cx="1019" cy="639" rx="3" ry="4"/></g>
<path d="M540 875Q600 730 718 730Q880 750 910 930Q915 1010 880 1090Q840 1180 880 1240Q930 1300 1005 1270M625 935Q650 850 718 850Q800 860 812 950Q815 1000 785 1075Q750 1150 765 1240Q780 1310 835 1344M1130 1260Q1110 1320 1095 1344M625 818Q650 795 683 790M738 790Q765 795 792 808M833 855Q855 880 860 915M862 980L848 1040M832 1085L815 1145M815 1210L837 1275M580 903L590 868M875 1323L908 1340M973 1338L1020 1315M1060 1285L1075 1270"/>
<path d="M127 1098L257 885L305 970L371 827L415 935M127 1098H640Q620 1065 560 1072L532 1078Q470 1045 420 1070L385 1098M205 975L235 960L247 998L262 945L300 965M325 925L350 915L360 960L378 905L400 920M445 970V1062M594 970V1070M400 990Q385 970 400 955L505 880Q520 870 540 880L640 965Q640 995 615 992L520 918L420 990Q405 995 400 990M492 975H547V1037H492ZM520 975V1037M492 1006H547M453 900V862M495 862V880M440 845Q440 825 460 825H490Q503 830 502 845Q500 862 485 862H455Q440 860 440 845"/>
<path d="M450 1270Q450 1190 490 1180M530 1160Q585 1180 585 1245M450 1270L585 1242Q602 1250 600 1280L465 1313Q447 1310 450 1270M490 1180L478 1165L490 1155L480 1140L497 1140L502 1125L510 1138L522 1125L520 1145H530L520 1157L530 1170L515 1168L508 1185L500 1170ZM280 1140Q270 1200 300 1235L370 1290Q400 1320 415 1344M620 1298Q605 1325 580 1325Q550 1325 540 1344"/>
<path d="M1040 975Q1030 930 1070 885Q1085 900 1070 935L1055 960Q1120 910 1122 945Q1125 980 1060 985Q1110 1000 1103 1020Q1090 1045 1060 1000Q1065 1080 1050 1080Q1025 1070 1040 1000L1010 1060Q985 1080 983 1055Q985 1020 1012 990Q960 985 962 950Q975 920 1040 975M1060 1020Q1085 1080 1082 1155M1075 1025Q1115 1080 1122 1158M910 1208Q950 1130 1005 1132Q1040 1140 1055 1162M910 1208H1000M972 1260Q1020 1155 1100 1155Q1180 1160 1223 1258Z"/>
<path d="M123 1344Q130 1250 230 1230Q280 1240 298 1285L325 1344M140 1290Q160 1330 165 1344M165 1255Q185 1290 190 1344M205 1235Q195 1290 205 1330M235 1230Q210 1280 225 1320M270 1245Q225 1290 235 1330M298 1285Q250 1290 250 1344"/>
</g>

<g>
<path d="M301 250Q297 190 345 176M350 145Q395 140 409 175Q412 215 395 235M430 185Q436 200 440 190M555 205Q565 185 580 200Q592 195 594 210Q610 205 612 225M560 215L570 225M578 205L588 228M590 205L600 230M540 147L585 139Q593 142 595 152L597 165Q594 172 586 175L548 179Q541 176 540 168ZM430 187Q437 176 444 184"/>
<circle cx="447" cy="190" r="43"/><path d="M430 184q5-9 9 0M450 180q5-9 9 0M432 198Q450 218 464 192"/>
<path d="M0 930Q30 928 55 960L60 995M0 1195L10 1193M505 870Q500 850 520 845Q540 840 540 860M585 812L592 785Q610 778 622 790M400 860Q395 820 440 815L470 820L490 860M20 1030Q60 1040 95 1060"/>
</g>
<text x="541" y="80" font-size="30" transform="rotate(5 541 70)">1:13</text>
<text x="421" y="72" font-size="56" transform="rotate(8 421 52)">文</text><text x="465" y="82" font-size="50" transform="rotate(-5 465 64)">A</text>
<text x="924" y="317" font-size="38" transform="rotate(-12 924 303)">24</text>
<text x="600" y="597" font-size="36" transform="rotate(-18 600 585)">1</text>
<text class="thin" x="570" y="172" font-size="26">***</text>
<text class="thin" x="1137" y="537" font-size="24" transform="rotate(8 1137 530)">t</text><text class="thin" x="1119" y="629" font-size="24">j</text><text class="thin" x="1021" y="642" font-size="22">a</text><text class="thin" x="1183" y="640" font-size="24">m</text>
</g>
</defs>
<use href="#doodles"/><use href="#doodles" x="898"/><use href="#doodles" x="-898"/>
</svg>

<div class="thread d-flex flex-column">
 <div class="outgoing d-flex flex-column align-items-end">
  <div class="bubble d-flex align-items-end"><span>oh sonny carey</span><span class="d-flex align-items-center gap-2"><time class="stamp">16:27</time><svg class="ticks" role="img" aria-label="Delivered"><use href="#ticks"/></svg></span></div>
 </div>
 <div class="outgoing follow d-flex flex-column align-items-end">
  <div class="bubble tail d-flex align-items-end"><span>1-1</span><span class="d-flex align-items-center gap-2"><time class="stamp">16:27</time><svg class="ticks" role="img" aria-label="Delivered"><use href="#ticks"/></svg></span></div>
 </div>
 <div class="incoming turn d-flex flex-column align-items-start">
  <div class="bubble tail d-flex align-items-end"><span>Do you want him to shag your (not quite) wife</span><time class="stamp">16:28</time></div>
  <button type="button" class="reaction d-flex align-items-center justify-content-center" aria-label="Laughing reaction"><svg><use href="#joy"/></svg></button>
 </div>
 <div class="outgoing turn d-flex flex-column align-items-end">
  <div class="bubble tail d-flex align-items-end"><span>i want ginger hair too</span><span class="d-flex align-items-center gap-2"><time class="stamp">16:28</time><svg class="ticks" role="img" aria-label="Delivered"><use href="#ticks"/></svg></span></div>
 </div>
 <div class="incoming turn d-flex flex-column align-items-start">
  <div class="bubble d-flex align-items-end"><span>I like to think I was your lucky charm<svg class="inline-emoji" role="img" aria-label="Four leaf clover"><use href="#clover"/></svg></span><time class="stamp">16:28</time></div>
  <button type="button" class="reaction d-flex align-items-center justify-content-center" aria-label="Heart reaction"><svg><use href="#heart"/></svg></button>
 </div>
 <div class="incoming follow d-flex flex-column align-items-start">
  <div class="bubble d-flex align-items-end"><span>You are a bit ginge</span><time class="stamp">16:28</time></div>
  <button type="button" class="reaction d-flex align-items-center justify-content-center" aria-label="Laughing reaction"><svg><use href="#joy"/></svg></button>
 </div>
 <div class="incoming follow d-flex flex-column align-items-start">
  <div class="bubble tail d-flex align-items-end"><span>Good day for you all in all eh</span><time class="stamp">16:29</time></div>
 </div>
 <div class="outgoing turn d-flex flex-column align-items-end">
  <div class="d-flex align-items-center">
   <button type="button" class="react-btn btn border-0 rounded-circle p-0 d-flex align-items-center justify-content-center" aria-label="React"><svg width="28" height="28" viewBox="0 0 28 28"><circle cx="14" cy="14" r="14" fill="#a9abab"/><circle cx="9.500" cy="10.500" r="1.800" fill="#444446"/><circle cx="18.500" cy="10.500" r="1.800" fill="#444446"/><path d="M7 15.500H21Q20 22.500 14 22.500Q8 22.500 7 15.500Z" fill="#a9abab" stroke="#444446" stroke-width="1.800" stroke-linejoin="round"/><path d="M8 18H20Q18 22 14 22Q10 22 8 18Z" fill="#444446"/></svg></button>
   <div class="bubble tail d-flex align-items-end"><span>so far</span><span class="d-flex align-items-center gap-2"><time class="stamp">16:29</time><svg class="ticks" role="img" aria-label="Delivered"><use href="#ticks"/></svg></span></div>
  </div>
  <button type="button" class="reaction d-flex align-items-center justify-content-center" aria-label="Heart reaction"><svg><use href="#heart"/></svg></button>
 </div>
 <div class="incoming turn d-flex flex-column align-items-start">
  <div class="bubble tail d-flex align-items-end"><span>I mean would you with sonny Carey<svg class="inline-emoji" role="img" aria-label="Rolling on the floor laughing"><use href="#rofl"/></svg></span><time class="stamp">16:29</time></div>
 </div>
 <div class="outgoing turn d-flex flex-column align-items-end">
  <div class="bubble d-flex align-items-end"><span>nooo</span><span class="d-flex align-items-center gap-2"><time class="stamp">16:30</time><svg class="ticks" role="img" aria-label="Delivered"><use href="#ticks"/></svg></span></div>
 </div>
 <div class="outgoing follow d-flex flex-column align-items-end">
  <div class="bubble tail d-flex align-items-end"><span>maybe after a hattrick<svg class="inline-emoji" role="img" aria-label="Winking face with tongue"><use href="#wink"/></svg></span><span class="d-flex align-items-center gap-2"><time class="stamp">16:31</time><svg class="ticks" role="img" aria-label="Delivered"><use href="#ticks"/></svg></span></div>
  <button type="button" class="reaction d-flex align-items-center justify-content-center" aria-label="Heart reaction"><svg><use href="#heart"/></svg></button>
 </div>
 <div class="incoming turn d-flex flex-column align-items-start">
  <div class="bubble d-flex align-items-end"><span>Come on you Addicks</span><time class="stamp">16:31</time></div>
  <button type="button" class="reaction d-flex align-items-center justify-content-center" aria-label="Laughing reaction"><svg><use href="#joy"/></svg></button>
 </div>
 <div class="incoming turn d-flex"><svg class="big-emoji" role="img" aria-label="Winking face with tongue"><use href="#wink"/></svg></div>
</div>
<button type="button" class="jump btn border-0 rounded-circle p-0 d-flex align-items-center justify-content-center" aria-label="Scroll to latest"><svg width="26" height="18" viewBox="0 0 26 18"><path d="M2 3L13 15L24 3" fill="none" stroke="#a9abab" stroke-width="3" stroke-linecap="round" stroke-linejoin="round"/></svg></button>
</main>
<script>
// Confetti rings of the wallpaper: [origin x, origin y, scale x, small, medium, large]
const rings=[
[0,0,2.613,"77,70 218,111 114,165 338,226 37,288 518,111 770,115 518,281 645,323 673,408 419,427 895,357 1017,74 1034,207 1155,296 1228,108 1411,101 1269,290 1510,341 1530,49 177,472 479,704 298,764 244,955 814,921 939,957 1189,910 1381,829 1305,1041 1434,705 816,1083 407,1023","297,32 546,41 836,187 434,308 946,299 804,457 390,763 1008,936 249,1100","871,1016"],
[600,0,2.613,"362,53 222,131 136,222 435,210 451,307 248,388 659,302 739,333 567,475 315,585 652,570 637,671 489,755 110,716 52,760 701,813 403,1002 732,1062 689,1116 471,1161 306,1203 223,1297 776,1250 1131,1137 1193,1137 1007,1180","320,107 514,264 673,409 621,485 589,740 15,205 945,565 1270,585 1027,1103","47,83"],
[350,400,2.412,"201,97 240,180 810,97 740,170 1043,154 1220,132 1319,50 517,317 542,403 479,537 740,531 1214,323 1173,548 1224,642 360,737 317,790 501,862 720,857 1022,796 1148,875 1095,1005 1196,1056 454,1073 627,1114 65,1145 1192,1140 14,990","256,260 610,334 875,368 1146,138 1091,563 428,590 647,718 937,782 893,963 676,1042 956,1030 1238,845 1147,1083 1246,1175","332,300 894,474 923,667"],
[900,380,2.521,"215,41 75,146 117,373 400,286 290,431 243,560 325,657 455,602 641,647 781,375 229,733 26,862 239,855 433,902 701,855 165,1001 464,1023 575,1009 174,1173 308,1187 417,1182 651,1198 49,1247 534,313 500,115","70,231 323,340 720,261 503,530 57,760 339,894 865,690","246,645 635,864"],
[350,800,2.412,"827,23 549,358 1179,147 1110,330 1171,324 1026,437 845,546 538,573 152,670 306,671 434,691 272,757 568,847 738,733 766,868 1148,729 1150,848 474,963 98,1051 242,1031 841,1121 1074,1274 1149,1274 1210,1207 486,1186 42,1296 462,1411 543,1441 277,1490 1035,1396 1325,621","880,82 810,190 583,258 646,334 907,235 724,498 918,484 1147,217 1214,423 1140,984 1236,1069 553,1229 995,1247 1219,1308 61,1220 450,1513 1090,1503 1248,605 20,204","695,222 22,656 1206,771 1186,1417"],
[900,860,2.521,"295,21 92,103 42,161 188,253 180,420 139,500 144,622 393,655 416,772 41,788 294,834 166,904 581,549 606,697 783,102 815,457 843,617 411,1148 404,1244 709,1267","268,250 468,567 190,810 80,1158 196,1168 710,1082","274,440 349,1187 58,1277"]];
const dots=document.getElementById("dots");
for(const [ox,oy,sx,...sizes] of rings)sizes.forEach((list,i)=>list.split(" ").forEach(p=>{
 const [x,y]=p.split(",");
 const c=document.createElementNS("http://www.w3.org/2000/svg","circle");
 c.setAttribute("cx",Math.round(ox+x/sx));c.setAttribute("cy",Math.round(oy+y/3));c.setAttribute("r",[4,7.5,10.5][i]);
 dots.append(c);
}));
</script>
</body>
</html>
